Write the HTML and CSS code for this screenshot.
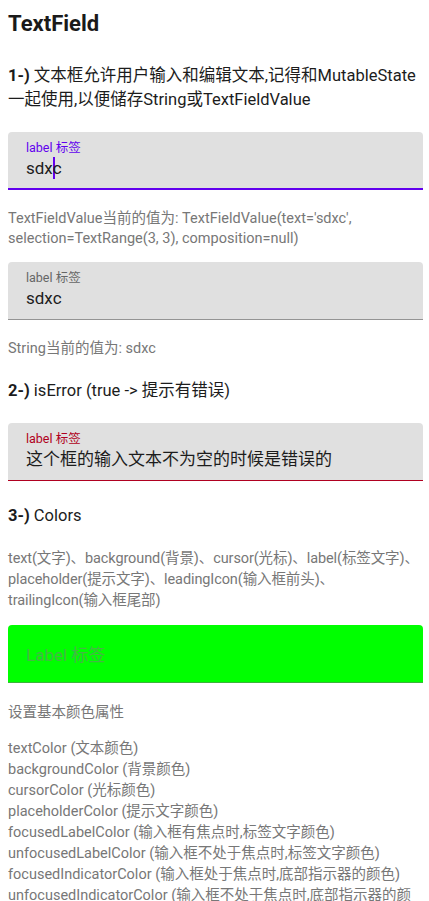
FILE: index.html
```html
<!DOCTYPE html>
<html lang="zh">
<head>
<meta charset="utf-8">
<link rel="stylesheet" href="styles.css">
</head>
<body>
<main class="page">
  <h1 class="title">TextField</h1>

  <p class="section s1"><b>1-)</b> 文本框允许用户输入和编辑文本,记得和MutableState一起使用,以便储存String或TextFieldValue</p>

  <div class="field focused f1">
    <span class="label">label 标签</span>
    <span class="value">sdx<span class="cursor"></span>c</span>
  </div>
  <p class="helper h1">TextFieldValue当前的值为: TextFieldValue(text='sdxc', selection=TextRange(3, 3), composition=null)</p>

  <div class="field f2">
    <span class="label">label 标签</span>
    <span class="value">sdxc</span>
  </div>
  <p class="helper h2">String当前的值为: sdxc</p>

  <p class="section s2"><b>2-)</b> isError (true -&gt; 提示有错误)</p>

  <div class="field error f3">
    <span class="label">label 标签</span>
    <span class="value">这个框的输入文本不为空的时候是错误的</span>
  </div>

  <p class="section s3"><b>3-)</b> Colors</p>

  <p class="helper h3">text(文字)、background(背景)、cursor(光标)、label(标签文字)、placeholder(提示文字)、leadingIcon(输入框前头)、<br>trailingIcon(输入框尾部)</p>

  <div class="field green f4">
    <span class="placeholder">Label 标签</span>
  </div>

  <p class="helper h4">设置基本颜色属性</p>

  <ul class="list">
    <li>textColor (文本颜色)</li>
    <li>backgroundColor (背景颜色)</li>
    <li>cursorColor (光标颜色)</li>
    <li>placeholderColor (提示文字颜色)</li>
    <li>focusedLabelColor (输入框有焦点时,标签文字颜色)</li>
    <li>unfocusedLabelColor (输入框不处于焦点时,标签文字颜色)</li>
    <li>focusedIndicatorColor (输入框处于焦点时,底部指示器的颜色)</li>
    <li>unfocusedIndicatorColor (输入框不处于焦点时,底部指示器的颜色)</li>
  </ul>
</main>
</body>
</html>
```

FILE: styles.css
```css
* { box-sizing: border-box; }
html, body { margin: 0; padding: 0; background: #fff; }
body {
  font-family: Roboto, "Noto Sans CJK SC", sans-serif;
  color: #1c1c1c;
  overflow: hidden;
  height: 901px;
}
.page {
  padding: 10px 6px 0 8px;
}
.title {
  margin: 0;
  font-size: 22px;
  font-weight: 700;
  line-height: 28px;
  color: #1a1a1a;
}
.section {
  margin: 0;
  font-size: 16.5px;
  line-height: 24px;
  color: #1c1c1c;
}
.section b { font-weight: 700; }
.s1 { margin-top: 26px; }
.s2 { margin-top: 20px; }
.s3 { margin-top: 23px; }

.field {
  position: relative;
  height: 58px;
  background: #e0e0e0;
  border-radius: 4px 4px 0 0;
  border-bottom: 1px solid #949494;
  padding: 7px 18px 0 18px;
  display: flex;
  flex-direction: column;
}
.field.focused { border-bottom: 2px solid #6200ee; }
.field.error { border-bottom: 1px solid #b00020; }
.f1 { margin-top: 20px; }
.f2 { margin-top: 13px; }
.f3 { margin-top: 20px; }
.f4 { margin-top: 14px; }

.label {
  font-size: 12.5px;
  line-height: 17px;
  color: #666;
}
.focused .label { color: #6200ee; }
.error .label { color: #b00020; }
.value {
  font-size: 17px;
  line-height: 24px;
  color: #1c1c1c;
  position: relative;
}
.cursor {
  display: inline-block;
  width: 2px;
  height: 22px;
  background: #6200ee;
  vertical-align: -5px;
  margin-right: -2px;
}

.field.green {
  background: #00ff00;
  border-bottom: 1px solid #3cb43c;
  justify-content: center;
  padding-top: 0;
}
.placeholder {
  font-size: 17px;
  color: #44b844;
}

.helper {
  margin: 0;
  font-size: 14.5px;
  line-height: 20px;
  color: #777;
}
.h1 { margin-top: 19px; }
.h2 { margin-top: 19px; }
.h3 {
  margin-top: 20px;
  margin-right: -6px;
  line-height: 21px;
  letter-spacing: -0.1px;
}
.h4 { margin-top: 20px; }

.list {
  list-style: none;
  margin: 15px 0 0 0;
  padding: 0;
  font-size: 14.5px;
  line-height: 21px;
  color: #777;
}
```
